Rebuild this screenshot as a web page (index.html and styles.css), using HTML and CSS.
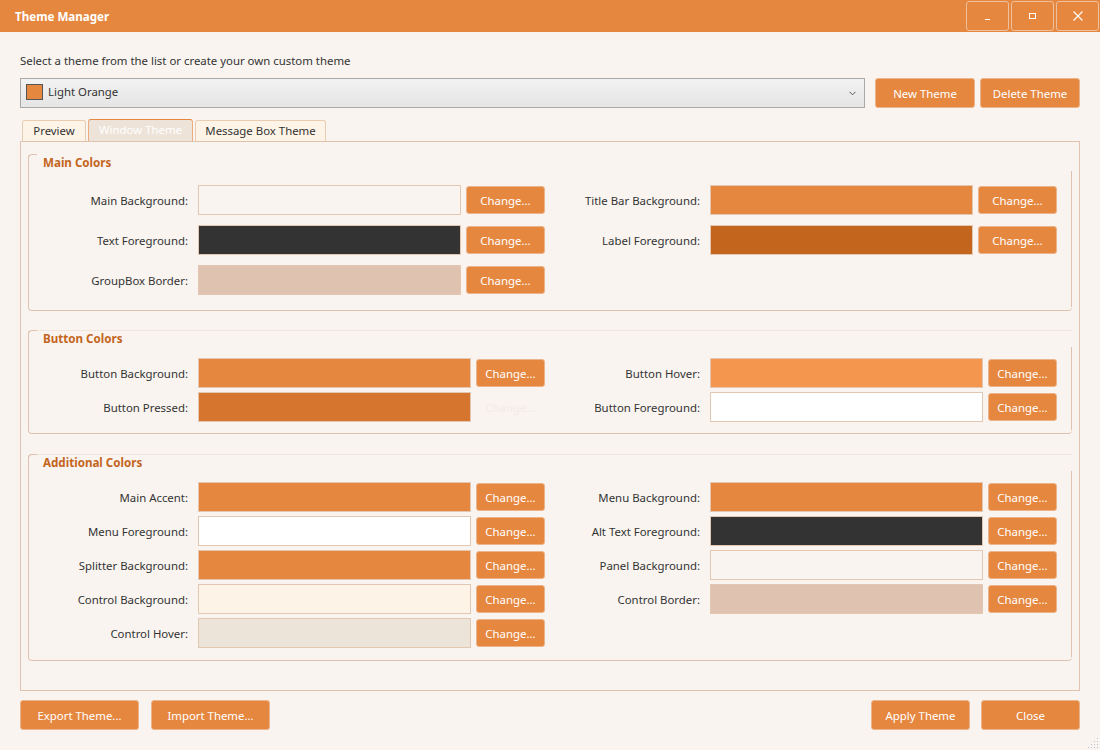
FILE: index.html
```html
<!DOCTYPE html>
<html lang="en">
<head>
<meta charset="utf-8">
<title>Theme Manager</title>
<link rel="stylesheet" href="styles.css">
</head>
<body>
<div class="window">
  <header class="titlebar">
    <span class="title">Theme Manager</span>
    <div class="caption">
      <button class="cap"><svg width="8" height="8" viewBox="0 0 8 8"><path d="M1 7.5h5" stroke="#fff" stroke-width="1"/></svg></button>
      <button class="cap"><svg width="9" height="8" viewBox="0 0 9 8"><rect x="1.5" y="1.5" width="6" height="5" fill="none" stroke="#fff" stroke-width="1"/></svg></button>
      <button class="cap"><svg width="10" height="10" viewBox="0 0 10 10"><path d="M0.5 0.5l9 9M9.5 0.5l-9 9" stroke="#fff" stroke-width="1.1"/></svg></button>
    </div>
  </header>

  <main class="content">
    <p class="intro">Select a theme from the list or create your own custom theme</p>
    <div class="theme-row">
      <div class="combo">
        <span class="combo-swatch"></span>
        <span class="combo-text">Light Orange</span>
        <svg class="chev" width="7" height="5" viewBox="0 0 7 5"><path d="M0.5 0.8l3 3 3-3" fill="none" stroke="#555" stroke-width="1"/></svg>
      </div>
      <button class="btn btn-top">New Theme</button>
      <button class="btn btn-top">Delete Theme</button>
    </div>

    <div class="tabs">
      <div class="tab">Preview</div>
      <div class="tab active">Window Theme</div>
      <div class="tab">Message Box Theme</div>
    </div>

    <div class="panel">
      <section class="group g-main">
        <h2 class="group-title">Main Colors</h2>
        <div class="grid">
          <span class="lbl">Main Background:</span><span class="sw" style="background:#f9f4f0"></span><button class="btn chg">Change...</button>
          <span class="lbl">Title Bar Background:</span><span class="sw" style="background:#e6873f"></span><button class="btn chg">Change...</button>

          <span class="lbl">Text Foreground:</span><span class="sw" style="background:#333333"></span><button class="btn chg">Change...</button>
          <span class="lbl">Label Foreground:</span><span class="sw" style="background:#c4651d"></span><button class="btn chg">Change...</button>

          <span class="lbl">GroupBox Border:</span><span class="sw" style="background:#dfc2b0"></span><button class="btn chg">Change...</button>
          <span></span><span></span><span></span>
        </div>
      </section>

      <section class="group g-btn">
        <h2 class="group-title">Button Colors</h2>
        <div class="grid">
          <span class="lbl">Button Background:</span><span class="sw" style="background:#e6873f"></span><button class="btn chg">Change...</button>
          <span class="lbl">Button Hover:</span><span class="sw" style="background:#f5964f"></span><button class="btn chg">Change...</button>

          <span class="lbl">Button Pressed:</span><span class="sw" style="background:#d6752d"></span><button class="btn chg ghost">Change...</button>
          <span class="lbl">Button Foreground:</span><span class="sw" style="background:#ffffff"></span><button class="btn chg">Change...</button>
        </div>
      </section>

      <section class="group g-add">
        <h2 class="group-title">Additional Colors</h2>
        <div class="grid">
          <span class="lbl">Main Accent:</span><span class="sw" style="background:#e6873f"></span><button class="btn chg">Change...</button>
          <span class="lbl">Menu Background:</span><span class="sw" style="background:#e6873f"></span><button class="btn chg">Change...</button>

          <span class="lbl">Menu Foreground:</span><span class="sw" style="background:#ffffff"></span><button class="btn chg">Change...</button>
          <span class="lbl">Alt Text Foreground:</span><span class="sw" style="background:#333333"></span><button class="btn chg">Change...</button>

          <span class="lbl">Splitter Background:</span><span class="sw" style="background:#e6873f"></span><button class="btn chg">Change...</button>
          <span class="lbl">Panel Background:</span><span class="sw" style="background:#f9f4f0"></span><button class="btn chg">Change...</button>

          <span class="lbl">Control Background:</span><span class="sw" style="background:#fdf4e7"></span><button class="btn chg">Change...</button>
          <span class="lbl">Control Border:</span><span class="sw" style="background:#dfc2b0"></span><button class="btn chg">Change...</button>

          <span class="lbl">Control Hover:</span><span class="sw" style="background:#ede4d9"></span><button class="btn chg">Change...</button>
          <span></span><span></span><span></span>
        </div>
      </section>
    </div>

    <footer class="footer">
      <div class="footer-left">
        <button class="btn btn-foot">Export Theme...</button>
        <button class="btn btn-foot">Import Theme...</button>
      </div>
      <div class="footer-right">
        <button class="btn btn-apply">Apply Theme</button>
        <button class="btn btn-close">Close</button>
      </div>
    </footer>
  </main>
  <div class="grip">
    <svg width="12" height="12" viewBox="0 0 12 12">
      <g fill="#b7c3d3">
        <rect x="10" y="1" width="1" height="1"/>
        <rect x="7" y="4" width="1" height="1"/><rect x="10" y="4" width="1" height="1"/>
        <rect x="4" y="7" width="1" height="1"/><rect x="7" y="7" width="1" height="1"/><rect x="10" y="7" width="1" height="1"/>
        <rect x="1" y="10" width="1" height="1"/><rect x="4" y="10" width="1" height="1"/><rect x="7" y="10" width="1" height="1"/><rect x="10" y="10" width="1" height="1"/>
      </g>
    </svg>
  </div>
</div>
</body>
</html>
```

FILE: styles.css
```css
* { box-sizing: border-box; }

html, body {
  margin: 0;
  padding: 0;
  width: 1100px;
  height: 750px;
  overflow: hidden;
  background: #f9f4f0;
  font-family: "Segoe UI", "Noto Sans", "Open Sans", sans-serif;
  font-size: 11.4px;
  color: #333333;
}

.window {
  position: relative;
  width: 1100px;
  height: 750px;
  display: flex;
  flex-direction: column;
  background: #f9f4f0;
}

/* Title bar */
.titlebar {
  height: 32px;
  background: #e6873f;
  display: flex;
  align-items: center;
  justify-content: space-between;
  padding-left: 15px;
  flex-shrink: 0;
}
.title {
  color: #ffffff;
  font-weight: 700;
  font-size: 11.6px;
}
.caption {
  display: flex;
  align-self: stretch;
  gap: 2px;
  padding: 1px 1px 1px 0;
}
.cap {
  width: 43px;
  height: 30px;
  background: #e6873f;
  border: 1px solid #eec09e;
  border-radius: 3px;
  display: flex;
  align-items: center;
  justify-content: center;
  padding: 0;
}

/* Content */
.content {
  flex: 1;
  display: flex;
  flex-direction: column;
  padding: 0 20px;
}
.intro {
  margin: 21px 0 0;
  line-height: 16px;
  height: 16px;
}
.theme-row {
  display: flex;
  margin-top: 9px;
  height: 30px;
}
.combo {
  flex: 1;
  height: 30px;
  border: 1px solid #a9a9a9;
  background: linear-gradient(#f2f2f2, #e5e5e5);
  display: flex;
  align-items: center;
  padding: 0 8px 0 5px;
  margin-right: 10px;
}
.combo-swatch {
  width: 17px;
  height: 16px;
  background: #e6873f;
  border: 1px solid #555555;
  margin-right: 5px;
  margin-top: -2px;
}
.combo-text { flex: 1; color: #333; margin-top: -3px; }
.chev { margin-top: 1px; }

.btn {
  font-family: inherit;
  font-size: 11.4px;
  color: #ffffff;
  background: #e6873f;
  border: 1px solid #ecb48a;
  border-radius: 3px;
  padding: 0;
  cursor: default;
}
.btn-top {
  width: 100px;
  height: 30px;
}
.btn-top + .btn-top { margin-left: 5px; }

/* Tabs */
.tabs {
  display: flex;
  margin-top: 11px;
  padding-left: 2px;
  height: 22px;
  align-items: flex-end;
  gap: 2px;
}
.tab {
  height: 21px;
  line-height: 19px;
  border: 1px solid #e9cdb3;
  border-bottom: none;
  border-radius: 3px 3px 0 0;
  background: #fdf3e6;
  padding: 0 10px;
  color: #333;
}
.tab:first-child { width: 64px; text-align: center; padding: 0; }
.tab.active {
  height: 22px;
  line-height: 20px;
  background: #ede3d8;
  border-color: #ecac7c;
  border-top-color: #e6873f;
  color: #ffffff;
  width: 105px;
  text-align: center;
  padding: 0;
}
.tab:last-child { width: 131px; text-align: center; padding: 0; }

.panel {
  height: 550px;
  border: 1px solid #dfc2b0;
  padding: 12px 7px 0 7px;
  display: flex;
  flex-direction: column;
}

/* Group boxes */
.group {
  position: relative;
  border-left: 1px solid #dfc2b0;
  border-bottom: 1px solid #dfc2b0;
  border-radius: 4px 0 4px 4px;
  border-top: 1px solid #f0e6de;
}
.group::before {
  content: "";
  position: absolute;
  left: -1px;
  top: -1px;
  width: 8px;
  height: 4px;
  border-top: 1px solid #dfc2b0;
  border-left: 1px solid #dfc2b0;
  border-top-left-radius: 4px;
}
.group::after {
  content: "";
  position: absolute;
  right: 0;
  top: 16px;
  bottom: 3px;
  border-right: 1px solid #dfc2b0;
}
.g-main { height: 157px; border-top-color: transparent; }
.g-btn { height: 104px; margin-top: 19px; }
.g-add { height: 207px; margin-top: 20px; }

.group-title {
  margin: 0;
  padding-left: 14px;
  font-size: 11.6px;
  font-weight: 700;
  color: #c4651d;
  line-height: 16px;
  height: 16px;
}

.grid {
  display: grid;
  align-items: center;
}
.g-main .grid {
  grid-template-columns: 169px 263px 84px 165px 263px 84px;
  grid-auto-rows: 30px;
  row-gap: 10px;
  margin-top: 14px;
}
.g-btn .grid,
.g-add .grid {
  grid-template-columns: 169px 273px 74px 165px 273px 74px;
  grid-auto-rows: 30px;
  row-gap: 4px;
}
.g-btn .grid { margin-top: 11px; }
.g-add .grid { margin-top: 11px; }

.lbl {
  text-align: right;
  padding-right: 10px;
  color: #333;
  white-space: nowrap;
}
.sw {
  display: block;
  height: 30px;
  border: 1px solid #e3c7b1;
}
.chg {
  height: 28px;
  margin-left: 5px;
}
.g-main .chg { width: 79px; }
.g-btn .chg, .g-add .chg { width: 69px; }
.chg.ghost {
  background: transparent;
  border-color: transparent;
  color: #f3ebe4;
}

/* Footer */
.footer {
  display: flex;
  justify-content: space-between;
  margin-top: 9px;
}
.footer-left, .footer-right { display: flex; }
.btn-foot { width: 119px; height: 30px; }
.btn-foot + .btn-foot { margin-left: 12px; }
.btn-apply { width: 99px; height: 30px; }
.btn-close { width: 99px; height: 30px; margin-left: 11px; }

.grip {
  position: absolute;
  right: 1px;
  bottom: 1px;
  width: 12px;
  height: 12px;
  line-height: 0;
}
```
